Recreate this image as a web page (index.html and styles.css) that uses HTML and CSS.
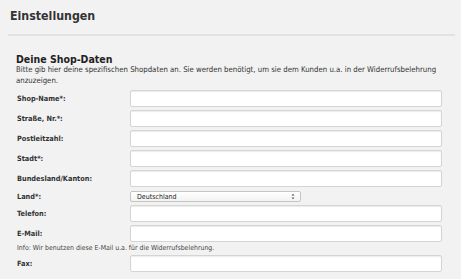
FILE: index.html
```html
<!DOCTYPE html>
<html lang="de">
<head>
<meta charset="utf-8">
<link rel="stylesheet" href="styles.css">
</head>
<body>
<header class="page-head">
  <h1 class="page-title">Einstellungen</h1>
</header>
<section class="panel">
  <h2 class="section-title">Deine Shop-Daten</h2>
  <p class="intro">Bitte gib hier deine spezifischen Shopdaten an. Sie werden benötigt, um sie dem Kunden u.a. in der Widerrufsbelehrung anzuzeigen.</p>
  <form class="form">
    <label class="lbl">Shop-Name*:</label><input class="field" type="text">
    <label class="lbl">Straße, Nr.*:</label><input class="field" type="text">
    <label class="lbl">Postleitzahl:</label><input class="field" type="text">
    <label class="lbl">Stadt*:</label><input class="field" type="text">
    <label class="lbl">Bundesland/Kanton:</label><input class="field" type="text">
    <label class="lbl">Land*:</label>
    <div class="select"><span>Deutschland</span><svg class="arrows" width="4" height="7" viewBox="0 0 4 7"><path d="M0.5 2.5 L2 0.8 L3.5 2.5 Z M0.5 4.5 L2 6.2 L3.5 4.5 Z" fill="#555"/></svg></div>
    <label class="lbl">Telefon:</label><input class="field" type="text">
    <label class="lbl">E-Mail:</label><input class="field" type="text">
    <p class="info">Info: Wir benutzen diese E-Mail u.a. für die Widerrufsbelehrung.</p>
    <label class="lbl">Fax:</label><input class="field" type="text">
  </form>
</section>
</body>
</html>
```
FILE: styles.css
```css
html, body {
  margin: 0;
  padding: 0;
  background: #f2f2f2;
  color: #333;
  font-family: "DejaVu Sans Condensed", "DejaVu Sans", sans-serif;
}
.page-head {
  margin: 0 6px 0 8px;
  padding: 8px 0 10px 2px;
  border-bottom: 2px solid #e2e2e2;
}
.page-title {
  margin: 0;
  font-size: 12.3px;
  line-height: 16px;
  font-weight: bold;
  color: #333;
}
.panel {
  padding: 17px 19px 0 16px;
}
.section-title {
  margin: 0;
  font-size: 10.5px;
  line-height: 12px;
  font-weight: bold;
  color: #222;
}
.intro {
  margin: 0 0 4px;
  font-size: 7.75px;
  line-height: 10.5px;
  color: #333;
}
.form {
  display: grid;
  grid-template-columns: 114px 312px;
  row-gap: 3px;
  align-items: center;
}
.lbl {
  padding-left: 1px;
  font-size: 7.3px;
  font-weight: bold;
  color: #333;
}
.field {
  box-sizing: border-box;
  width: 312px;
  height: 17px;
  margin: 0;
  border: 1px solid #d4d4d4;
  border-radius: 2px;
  background: #fff;
  box-shadow: inset 0 1px 1px rgba(0,0,0,0.08);
}
.select {
  box-sizing: border-box;
  width: 171px;
  height: 11px;
  margin-top: 1px;
  border: 1px solid #c4c4c4;
  border-radius: 2px;
  background: linear-gradient(#fff, #f3f3f3);
  display: flex;
  align-items: center;
  justify-content: space-between;
  padding: 0 5px 0 6px;
  font-size: 7px;
  color: #222;
}
.arrows {
  display: block;
}
.info {
  grid-column: 1 / 3;
  margin: 0;
  padding-left: 1px;
  font-size: 6.9px;
  line-height: 7px;
  color: #444;
}
```
